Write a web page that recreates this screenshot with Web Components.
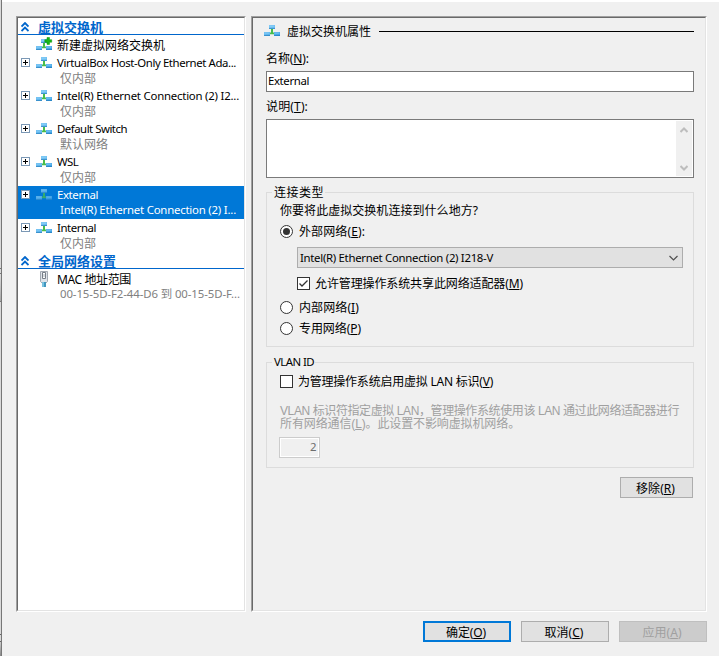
<!DOCTYPE html>
<html lang="zh-CN">
<head>
<meta charset="utf-8">
<title>虚拟交换机管理器</title>
<style>
html,body{margin:0;height:656px;overflow:hidden;background:#f0f0f0}
body{font:12px/16px "Noto Sans","Noto Sans CJK SC",sans-serif;color:#000}
</style>
</head>
<body>
<switch-manager></switch-manager>
<script>
const define = (name, html, setup) => {
  const t = document.createElement('template');
  t.innerHTML = html;
  customElements.define(name, class extends HTMLElement {
    constructor() {
      super();
      this.attachShadow({mode: 'open'}).appendChild(t.content.cloneNode(true));
    }
    connectedCallback() { if (setup) setup(this, this.shadowRoot); }
  });
};

/* Text line spaced out to the advance width given in "w"; pure Latin lines use a smaller size. */
define('ui-text', `<style>
  :host{display:inline-block;white-space:pre;flex:none;line-height:16px;height:16px}
  span{display:inline-block}
  span.latin{font-size:11.4px;transform:translateY(-1px)}
  ::slotted(u){text-underline-offset:1px;text-decoration-thickness:1px;text-decoration-skip-ink:none}
</style><span><slot></slot></span>`, (el, root) => {
  const w = +el.getAttribute('w');
  if (!w) return;
  const s = root.querySelector('span');
  if (el.hasAttribute('small') || !/[\u3000-\u9fff]/.test(el.textContent)) s.className = 'latin';
  s.style.letterSpacing = '0px';
  const n = [...el.textContent].length;
  s.style.letterSpacing = ((w - s.getBoundingClientRect().width) / n) + 'px';
  el.style.width = w + 'px';
});

define('net-icon', `<style>
  :host{display:block;width:16px;height:16px;flex:none}
  svg{display:block;overflow:visible}
  .plus{display:none}
  :host([add]) .plus{display:block}
  :host([dim]) svg{opacity:.75}
</style><svg width="16" height="16" viewBox="0 0 16 16">
  <defs><linearGradient id="b" x1="0" y1="0" x2="1" y2="1"><stop offset="0" stop-color="#8bd0f8"/><stop offset="1" stop-color="#3a9fe4"/></linearGradient></defs>
  <path d="M7 6h2v4.500h3v1.800H4.500v-1.800H7z" fill="#48bd4b"/>
  <path d="M5 3h6v4H5zM0 10h6v4H0zM10 10h6v4h-6z" fill="url(#b)"/>
  <path d="M5.500 3.500h5v1.500h-5zM.5 10.500h5v1.200h-5zM10.500 10.500h5v1.200h-5z" fill="#8fd3f8" opacity=".6"/>
  <path d="M5 6.500h6V7H5zM0 13.500h6v.5H0zM10 13.500h6v.5h-6z" fill="#176fac"/>
  <path class="plus" transform="translate(0 1)" d="M11 .5h2.500v2.200h2.200v2.500h-2.200v2.200H11V5.200H8.800V2.700H11z" fill="#16b816" stroke="#079307" stroke-width=".5"/>
</svg>`);

define('plug-icon', `<style>:host{display:block;width:16px;height:16px;flex:none}svg{display:block;margin-top:1px}</style>
<svg width="16" height="16" viewBox="0 0 16 16">
  <path d="M4.500 .5h7v10l-1.500 1.500H6L4.500 10.500z" fill="#dfe3e9" stroke="#a3a9b2"/>
  <path d="M6.500 1.500h3v6h-3z" fill="#fff" stroke="#787f89"/>
  <path d="M7.500 3v3h1V3z" fill="#aeb5bd"/>
  <path d="M6 11h4v5H6z" fill="#4196be"/><path d="M6 11h2v5H6z" fill="#7ac2df"/>
</svg>`);

define('tree-header', `<style>
  :host{display:flex;height:16px;border-bottom:1px solid #06c;color:#06c;font-weight:700;font-size:13px}
  svg{flex:none;margin:4px 9px 0 3px}
  div{margin-top:1px}
</style><svg width="8" height="10" viewBox="0 0 8 10"><path d="M.5 4.500 4 1l3.500 3.500M.5 9 4 5.500 7.500 9" fill="none" stroke="#06c" stroke-width="1.8"/></svg><div><slot></slot></div>`);

define('tree-item', `<style>
  :host{display:grid;box-sizing:border-box;grid-template-columns:18px 21px 1fr;height:33px;overflow:hidden;align-items:start}
  :host([single]){height:19px;padding-top:1px}
  :host([late]){padding-top:1px}
  :host([selected]){background:#0078d7;color:#fff}
  .box{width:7px;height:7px;margin:4px 0 0 3px;border:1px solid #7b98b5;background:#fff;display:none}
  :host([expandable]) .box{display:block}
  svg{display:block}
  .t{padding-top:1px;height:16px}
  .s{padding-left:3px;color:#808080;height:16px;margin-top:-1px}
  :host([selected]) .s{color:#fff}
  :host([single]) .s{display:none}
  :host([single]) .t{padding-top:2px}
  .w{position:relative;top:1px}
  :host([single]) .w{top:0}
</style>
<div><div class="box"><svg width="7" height="7"><path d="M1 3.500h5M3.500 1v5" stroke="#000"/></svg></div></div>
<slot name="icon"></slot>
<div class="w"><div class="t"><slot></slot></div><div class="s"><slot name="sub"></slot></div></div>`);

define('sunken-panel', `<style>
  :host{display:block;box-sizing:border-box;border:1px solid;border-color:#a0a0a0 #fff #fff #a0a0a0}
  div{box-sizing:border-box;height:100%;border:1px solid;border-color:#696969 #e3e3e3 #e3e3e3 #696969}
</style><div><slot></slot></div>`);

define('group-box', `<style>
  :host{display:block;box-sizing:border-box;border:1px solid #dcdcdc;padding:0 10px 0 13px}
  .l{display:table;background:#f0f0f0;height:16px;margin:-8px 0 -1px -8px;padding:0 1px}
</style><div class="l"><slot name="label"></slot></div><slot></slot>`);

define('radio-option', `<style>
  :host{display:flex;align-items:flex-start;gap:6px;height:16px}
  svg{flex:none;margin-top:1px}circle.d{display:none}:host([checked]) .d{display:block}
</style><svg width="13" height="13"><circle cx="6.500" cy="6.500" r="6" fill="#fff" stroke="#333"/><circle class="d" cx="6.500" cy="6.500" r="3.500" fill="#333"/></svg><slot></slot>`);

define('check-option', `<style>
  :host{display:flex;align-items:flex-start;gap:5px;height:16px}
  svg{flex:none;margin-top:1px}path{display:none}:host([checked]) path{display:block}
</style><svg width="13" height="13"><rect x=".5" y=".5" width="12" height="12" fill="#fff" stroke="#333"/><path d="M2.500 6.500 5 9l5.500-5.500" fill="none" stroke="#333" stroke-width="1.3"/></svg><slot></slot>`);

define('push-button', `<style>
  :host{display:flex;align-items:center;justify-content:center;box-sizing:border-box;width:88px;height:21px;background:#e1e1e1;border:1px solid #adadad}
  :host([primary]){border:2px solid #0078d7}
  :host([disabled]){background:#ccc;border-color:#bfbfbf;color:#a0a0a0}
  div{height:16px;padding:2px 2px 0 0}
</style><div><slot></slot></div>`);

define('text-field', `<style>
  :host{display:flex;box-sizing:border-box;height:21px;border:1px solid #7a7a7a;background:#fff;padding:2px 1px}
</style><slot></slot>`);

define('text-area', `<style>
  :host{display:flex;justify-content:flex-end;box-sizing:border-box;height:59px;border:1px solid #7a7a7a;background:#fff;padding:1px}
  div{width:16px;background:#f0f0f0;display:flex;flex-direction:column;justify-content:space-between;padding:5px 0 4px;box-sizing:border-box}
  svg{display:block;margin-left:4px}
</style><div>
<svg width="8" height="8"><path d="M.5 6 4 2.500 7.500 6" fill="none" stroke="#bdbdbd" stroke-width="2"/></svg>
<svg width="8" height="8"><path d="M.5 2 4 5.500 7.500 2" fill="none" stroke="#bdbdbd" stroke-width="2"/></svg></div>`);

define('select-box', `<style>
  :host{display:flex;justify-content:space-between;box-sizing:border-box;height:21px;border:1px solid #adadad;background:#e1e1e1;padding:3px 4px 0 2px}
  svg{margin-top:4px}
</style><slot></slot><svg width="9" height="7"><path d="M.5 1 4.500 5 8.500 1" fill="none" stroke="#505050" stroke-width="1.2"/></svg>`);

define('window-edge', `<style>
  :host{display:flex;flex-direction:column;width:1px;height:656px;border-right:1px solid #777;background:#d9d9d9}
  i{display:block;flex:none}
</style><i style="height:268px"></i><i style="height:1px;background:#777"></i><i style="height:4px"></i><i style="height:1px;background:#777"></i><i style="height:27px;background:linear-gradient(#ddd,#a8a8a8)"></i><i style="height:1px;background:#777"></i><i style="height:332px"></i><i style="height:1px;background:#666"></i><i style="height:6px"></i><i style="height:1px;background:#666"></i><i style="height:14px;background:linear-gradient(#ccc,#888)"></i>`);

define('switch-tree', `<style>:host{display:block}</style>
<tree-header><ui-text w="65">虚拟交换机</ui-text></tree-header>
<tree-item single><net-icon slot="icon" add></net-icon><ui-text w="108">新建虚拟网络交换机</ui-text></tree-item>
<tree-item expandable><net-icon slot="icon"></net-icon><ui-text w="179">VirtualBox Host-Only Ethernet Ada...</ui-text><ui-text slot="sub" w="36">仅内部</ui-text></tree-item>
<tree-item expandable><net-icon slot="icon"></net-icon><ui-text w="182">Intel(R) Ethernet Connection (2) I2...</ui-text><ui-text slot="sub" w="36">仅内部</ui-text></tree-item>
<tree-item expandable><net-icon slot="icon"></net-icon><ui-text w="70">Default Switch</ui-text><ui-text slot="sub" w="48">默认网络</ui-text></tree-item>
<tree-item expandable><net-icon slot="icon"></net-icon><ui-text w="21">WSL</ui-text><ui-text slot="sub" w="36">仅内部</ui-text></tree-item>
<tree-item expandable selected><net-icon slot="icon" dim></net-icon><ui-text w="41">External</ui-text><ui-text slot="sub" w="176">Intel(R) Ethernet Connection (2) I...</ui-text></tree-item>
<tree-item expandable><net-icon slot="icon"></net-icon><ui-text w="39">Internal</ui-text><ui-text slot="sub" w="36">仅内部</ui-text></tree-item>
<tree-header><ui-text w="78">全局网络设置</ui-text></tree-header>
<tree-item late><plug-icon slot="icon"></plug-icon><ui-text w="74">MAC 地址范围</ui-text><ui-text slot="sub" w="180" small>00-15-5D-F2-44-D6 到 00-15-5D-F...</ui-text></tree-item>`);

define('switch-properties', `<style>
  :host{display:block;padding:5px 11px 0 13px}
  .head{display:flex;align-items:center;height:16px;margin-left:-2px}
  .head net-icon{margin:-2px 7px 0 0}
  .head ui-text{margin-top:1px}
  .head i{flex:1;height:1px;background:#000;margin-left:8px}
  .lab{display:block}
  .desc{color:#a0a0a0;margin-top:15px;line-height:13px;font-family:"Liberation Sans","Noto Sans CJK SC",sans-serif}
  .desc ui-text{display:block;height:13px;line-height:13px}
  .vid{display:flex;justify-content:flex-end;box-sizing:border-box;width:41px;height:21px;border:1px solid #ccc;box-shadow:inset 0 0 0 1px #fff;color:#6d6d6d;padding:2px 2px;margin:6px 0 0 -1px}
  .end{display:flex;justify-content:flex-end;margin-top:9px;padding-right:1px}
  .end push-button{width:73px}
</style>
<div class="head"><net-icon></net-icon><ui-text w="84">虚拟交换机属性</ui-text><i></i></div>
<ui-text class="lab" w="43" style="margin:12px 0 4px">名称(<u>N</u>):</ui-text>
<text-field><ui-text w="41">External</ui-text></text-field>
<ui-text class="lab" w="42" style="margin:7px 0 4px">说明(<u>T</u>):</ui-text>
<text-area></text-area>
<group-box style="height:155px;margin-top:14px">
  <ui-text slot="label" w="50" style="padding-left:1px">连接类型</ui-text>
  <ui-text class="lab" w="198" style="margin-top:3px">你要将此虚拟交换机连接到什么地方?</ui-text>
  <radio-option checked style="margin-top:5px"><ui-text w="66">外部网络(<u>E</u>):</ui-text></radio-option>
  <select-box style="margin:7px 0 0 17px"><ui-text w="193">Intel(R) Ethernet Connection (2) I218-V</ui-text></select-box>
  <check-option checked style="margin:8px 0 0 17px"><ui-text w="208">允许管理操作系统共享此网络适配器(<u>M</u>)</ui-text></check-option>
  <radio-option style="margin-top:8px"><ui-text w="60">内部网络(<u>I</u>)</ui-text></radio-option>
  <radio-option style="margin-top:5px"><ui-text w="62">专用网络(<u>P</u>)</ui-text></radio-option>
</group-box>
<group-box style="height:106px;margin-top:15px">
  <ui-text slot="label" w="40" style="padding-left:1px">VLAN ID</ui-text>
  <check-option style="margin-top:4px"><ui-text w="195">为管理操作系统启用虚拟 LAN 标识(<u>V</u>)</ui-text></check-option>
  <div class="desc"><ui-text w="399">VLAN 标识符指定虚拟 LAN，管理操作系统使用该 LAN 通过此网络适配器进行</ui-text><ui-text w="240">所有网络通信(<u>L</u>)。此设置不影响虚拟机网络。</ui-text></div>
  <div class="vid"><ui-text w="7">2</ui-text></div>
</group-box>
<div class="end"><push-button><ui-text w="39">移除(<u>R</u>)</ui-text></push-button></div>`);

define('switch-manager', `<style>
  :host{display:flex;width:719px;height:656px;background:#f0f0f0}
  main{flex:1;border-top:2px solid #fff;padding:14px 12px 0 14px;box-sizing:border-box}
  .cols{display:grid;grid-template-columns:230px 456px;gap:5px;height:596px}
  footer{display:flex;gap:10px;justify-content:flex-end;margin-top:9px}
</style>
<window-edge></window-edge>
<main>
  <div class="cols">
    <sunken-panel style="background:#fff"><switch-tree></switch-tree></sunken-panel>
    <sunken-panel><switch-properties></switch-properties></sunken-panel>
  </div>
  <footer>
    <push-button primary><ui-text w="40">确定(<u>O</u>)</ui-text></push-button>
    <push-button><ui-text w="39">取消(<u>C</u>)</ui-text></push-button>
    <push-button disabled><ui-text w="39">应用(<u>A</u>)</ui-text></push-button>
  </footer>
</main>`);
</script>
</body>
</html>
